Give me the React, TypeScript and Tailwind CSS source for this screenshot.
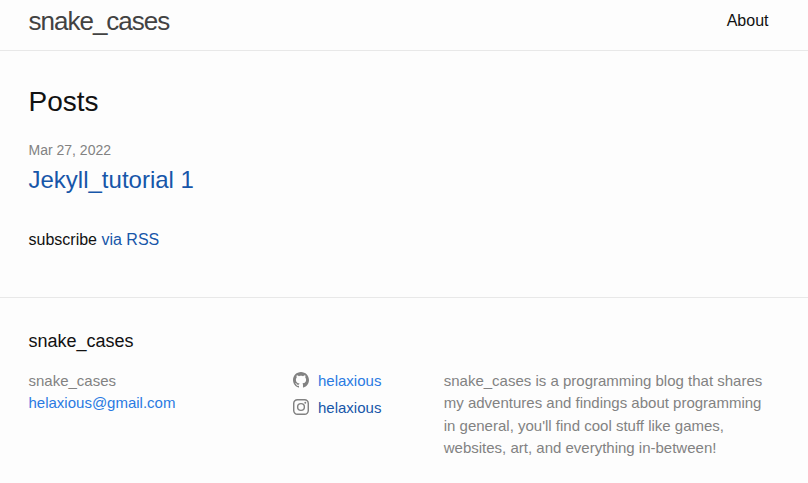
import React from "react";

function GithubIcon() {
  return (
    <svg viewBox="0 0 16 16" className="mt-0.5 h-4 w-4 fill-[#828282]">
      <path fillRule="evenodd" d="M8 0C3.58 0 0 3.582 0 8c0 3.535 2.292 6.533 5.47 7.59.4.075.547-.172.547-.385 0-.19-.007-.693-.01-1.36-2.226.483-2.695-1.073-2.695-1.073-.364-.924-.89-1.17-.89-1.17-.725-.496.056-.486.056-.486.803.056 1.225.824 1.225.824.714 1.223 1.873.87 2.33.665.072-.517.278-.87.507-1.07-1.777-.2-3.644-.888-3.644-3.953 0-.873.31-1.587.823-2.147-.083-.202-.358-1.015.077-2.117 0 0 .672-.215 2.2.82.638-.178 1.323-.266 2.003-.27.68.004 1.364.092 2.003.27 1.527-1.035 2.198-.82 2.198-.82.437 1.102.163 1.915.08 2.117.513.56.823 1.274.823 2.147 0 3.073-1.87 3.75-3.653 3.947.287.246.543.735.543 1.48 0 1.07-.01 1.933-.01 2.195 0 .215.144.463.55.385C13.71 14.53 16 11.534 16 8c0-4.418-3.582-8-8-8z" />
    </svg>
  );
}

function InstagramIcon() {
  return (
    <svg viewBox="0 0 16 16" className="mt-0.5 h-4 w-4 fill-none stroke-[#828282]" strokeWidth="1.45">
      <rect x=".72" y=".72" width="14.56" height="14.56" rx="3.8" />
      <circle cx="8" cy="8" r="3.38" />
      <circle cx="12.27" cy="3.73" r=".96" className="fill-[#828282]" stroke="none" />
    </svg>
  );
}

export default function App() {
  return (
    <div className="flex h-[483px] flex-col overflow-hidden bg-[#fdfdfd] font-['Liberation_Sans',Arial,sans-serif] text-base text-[#111]">
      <header className="flex h-[51px] shrink-0 items-start justify-between border-b border-[#e8e8e8] pr-[39.5px] pl-[28.5px]">
        <a className="-mt-[6px] text-[26px] leading-[54px] tracking-[-1px] text-[#424242]">snake_cases</a>
        <a className="-mt-[6px] leading-[54px]">About</a>
      </header>
      <main className="h-[246px] shrink-0 px-[28.5px] pt-[30px]">
        <h2 className="text-[28px] leading-[42px]">Posts</h2>
        <div className="mt-[17px] text-sm leading-[21px] text-[#828282]">Mar 27, 2022</div>
        <h3 className="mt-px text-2xl leading-9 text-[#1756a9]">Jekyll_tutorial 1</h3>
        <p className="mt-[30px] leading-6">subscribe <a className="text-[#1756a9]">via RSS</a></p>
      </main>
      <footer className="flex-1 border-t border-[#e8e8e8] pt-[30px] pl-[28.5px]">
        <h2 className="text-lg leading-[27px]">snake_cases</h2>
        <div className="mt-[14.8px] flex text-[15px] leading-[22.5px] text-[#828282]">
          <div className="w-[264.5px]">
            <p>snake_cases</p>
            <a className="text-[#2a7ae2]">helaxious@gmail.com</a>
          </div>
          <div className="flex w-[150.75px] flex-col gap-[4.5px]">
            <a className="flex gap-[9px] text-[#2a7ae2]"><GithubIcon />helaxious</a>
            <a className="flex gap-[9px] text-[#1756a9]"><InstagramIcon />helaxious</a>
          </div>
          <p className="w-[325px]">snake_cases is a programming blog that shares my adventures and findings about programming in general, you'll find cool stuff like games, websites, art, and everything in-between!</p>
        </div>
      </footer>
    </div>
  );
}
